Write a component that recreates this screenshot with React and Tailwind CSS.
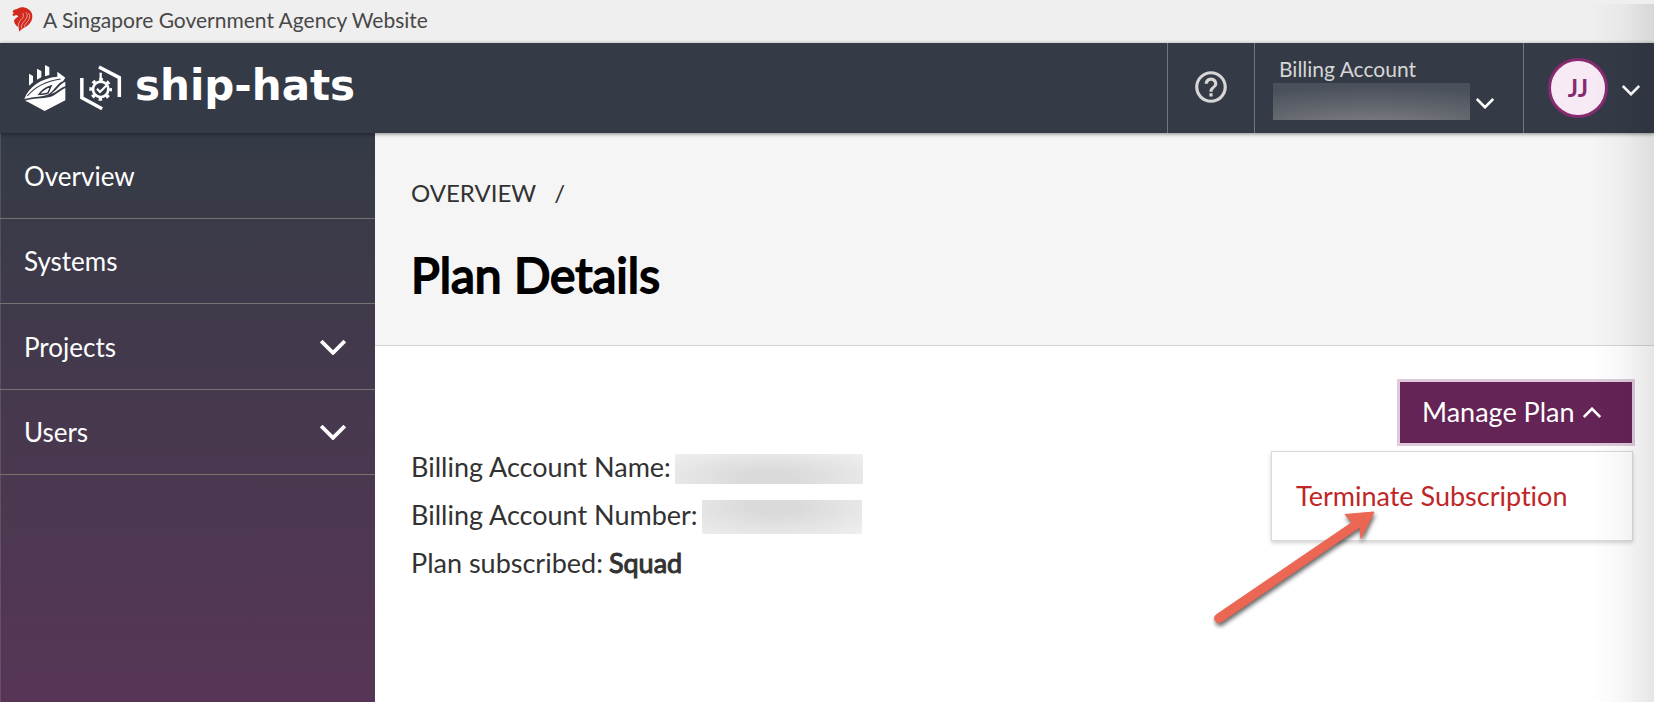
import React from "react";
import { MdHelpOutline } from "react-icons/md";

function Chevron({ up = false, className = "" }) {
  return (
    <svg viewBox="0 0 24 14" fill="none" stroke="currentColor" className={className} aria-hidden="true">
      <path d={up ? "M1 13 12 2 23 13" : "M1 1 12 12 23 1"} strokeWidth="3.5" />
    </svg>
  );
}

function LionMark() {
  return (
    <svg viewBox="0 0 62 74" className="h-[25px] w-[21px]" aria-hidden="true">
      <path
        fill="#d3281c"
        d="M5 9C10 7 14 8 18 4c8-5 20-4 28 1 8 4 13 11 14 20 1 10-3 20-12 28-7 6-17 10-28 20 2-7 0-11-4-15-6-5-10-11-10-18 2-6 8-9 13-12l-5-4-11 3-2-5 5-4-5-3 4-6Z"
      />
      <g fill="none" stroke="#efefef" strokeWidth="1.8" strokeLinecap="round">
        <path d="M32 19c5 7 0 13-6 19-6 7-9 13-6 23" />
        <path d="M42 17c6 9 2 16-5 24-6 7-10 12-9 21" />
        <path d="M50 19c5 10 1 18-5 25-4 5-7 8-8 13" />
      </g>
    </svg>
  );
}

function ShipHatsMark() {
  return (
    <svg viewBox="42 42 297 144" className="h-12 w-[99px]" aria-hidden="true">
      <g fill="#fff">
        <path d="M57 71l12 7v19l-12 10Z" />
        <path d="M81 56l13 7v19l-13 7Z" />
        <path d="M105 45l13 7v23l-13 4Z" />
        <path d="M43 147C56 112 92 84 142 80V65l24 18-7 11c-16 5-25 26-42 38-17 10-43 7-74 15Z" />
        <path d="M166 95v14c-17 5-28 20-43 22 18-11 26-29 43-36Z" />
        <path d="M45 152c25-8 52-5 75-11 18-5 29-20 46-27v37l-62 32-50-27Z" />
      </g>
      <path d="M52 138C76 109 106 94 152 87" fill="none" stroke="#343a46" strokeWidth="3.5" />
      <path d="M87 133c8-11 19-19 36-25l-9 21c-8 4-18 3-27 4Z" fill="#fff" stroke="#343a46" strokeWidth="4.5" />
      <g fill="none" stroke="#fff" strokeWidth="10.5">
        <path d="M215.500 84v59l61 33" />
        <path d="M267 51l61 32v58" />
        <circle cx="272" cy="118" r="23" strokeWidth="8" />
        <circle cx="272" cy="118" r="30" strokeWidth="8" strokeDasharray="11 12.560" strokeDashoffset="5" />
        <path d="M272 68v26" strokeWidth="7" />
        <path d="M261 116l9 10 20-20" strokeWidth="6.5" />
      </g>
    </svg>
  );
}

const navItems = [
  { label: "Overview" },
  { label: "Systems" },
  { label: "Projects", expandable: true },
  { label: "Users", expandable: true },
];

function Sidebar() {
  return (
    <nav className="w-[375px] shrink-0 bg-linear-to-b from-[#343b46] to-[#573556] text-white shadow-[inset_1px_0_0_rgba(255,255,255,0.12)]">
      <ul className="grid h-[342px] grid-rows-4 text-[26px]">
        {navItems.map((item) => (
          <li key={item.label} className="border-b border-[#74736f]">
            {item.expandable ? (
              <button type="button" className="flex h-full w-full items-center justify-between pt-0.5 pr-[29px] pl-6">
                {item.label}
                <Chevron className="h-[15px] w-[26px]" />
              </button>
            ) : (
              <a href="#" className="flex h-full items-center px-6 pt-0.5">
                {item.label}
              </a>
            )}
          </li>
        ))}
      </ul>
    </nav>
  );
}

function Header() {
  return (
    <header className="relative z-10 flex h-[90px] items-stretch bg-[#343a46] shadow-[0_1px_4px_rgba(0,0,0,0.45)]">
      <a href="#" className="flex items-center gap-3 pl-6 text-white">
        <ShipHatsMark />
        <span className="pb-1 font-['DejaVu_Sans',sans-serif] text-[42px] leading-none font-bold">ship-hats</span>
      </a>
      <button
        type="button"
        aria-label="Help"
        className="ml-auto flex w-[87px] items-center justify-center border-l border-[#74767b] pb-0.5 text-[#d6d6d6]"
      >
        <MdHelpOutline className="size-[38px]" />
      </button>
      <button
        type="button"
        aria-label="Billing Account"
        className="flex w-[269px] flex-col items-start border-l border-[#74767b] pt-3 pl-[18px]"
      >
        <span className="pl-1.5 text-[21px] leading-7 text-[#d6d6d6]">Billing Account</span>
        <span className="flex items-center gap-1.5">
          <span className="h-[37px] w-[197px] bg-[radial-gradient(ellipse_110%_120%_at_50%_130%,#84878c_0%,#666970_50%,#4b515b_100%)]" />
          <Chevron className="mt-1 h-[11px] w-[18px] text-white" />
        </span>
      </button>
      <button
        type="button"
        aria-label="User menu"
        className="flex w-[131px] items-center gap-3.5 border-l border-[#74767b] pl-6 text-white"
      >
        <span className="flex size-[60px] items-center justify-center rounded-full border-3 border-[#862b70] bg-[#f7eaf4] text-2xl font-bold text-[#862b70]">
          JJ
        </span>
        <Chevron className="mt-1 h-[11px] w-[18px]" />
      </button>
    </header>
  );
}

function PointerArrow() {
  return (
    <svg
      viewBox="0 0 174 124"
      className="pointer-events-none absolute top-14 -left-[61px] h-[124px] w-[174px] drop-shadow-[1px_3px_2px_rgba(0,0,0,0.6)]"
      aria-hidden="true"
    >
      <path
        fill="#ec6654"
        d="M5 107 141 14.500 134 6.500 163 4 150 30.500 149 19 11 113.500A4 4 0 0 1 5 107Z"
        stroke="#ec6654"
        strokeWidth="1"
      />
    </svg>
  );
}

function ManagePlan() {
  return (
    <div className="relative flex justify-end">
      <button
        type="button"
        aria-expanded="true"
        className="flex h-[61px] w-[232px] items-center gap-2 bg-[#642455] pl-[22px] text-[27px] text-white ring-3 ring-[#decadb]"
      >
        Manage Plan
        <Chevron up className="h-[11px] w-[18px]" />
      </button>
      <div className="absolute top-full -right-px mt-2 w-[362px] border border-[#dadada] bg-white shadow-[0_2px_4px_rgba(0,0,0,0.18)]">
        <button type="button" className="flex h-[88px] w-full items-center px-6 text-[27px] text-[#c02626]">
          Terminate Subscription
        </button>
        <PointerArrow />
      </div>
    </div>
  );
}

export default function App() {
  return (
    <div className="relative flex min-h-screen flex-col bg-white font-[Lato,sans-serif] text-[#323232] [font-variant-ligatures:none]">
      <div className="flex h-[43px] items-center gap-2.5 bg-[#efefef] pb-1 pl-3 text-[21px] text-[#484848]">
        <LionMark />
        A Singapore Government Agency Website
      </div>
      <Header />
      <div className="flex flex-1">
        <Sidebar />
        <main className="min-w-0 flex-1">
          <div className="h-[213px] border-b border-[#d4d4d4] bg-[#f5f5f5] pt-11 pl-9">
            <nav aria-label="Breadcrumb" className="flex gap-[18px] text-2xl leading-8">
              <a href="#">OVERVIEW</a>
              <span>/</span>
            </nav>
            <h1 className="mt-[34px] text-5xl leading-[64px] font-normal text-black [-webkit-text-stroke:2px]">Plan Details</h1>
          </div>
          <section className="pt-9 pr-[22px] pl-9">
            <ManagePlan />
            <dl className="text-[27px] leading-[48px]">
              <div className="flex items-center gap-1">
                <dt>Billing Account Name:</dt>
                <dd className="mt-1 h-[30px] w-[188px] bg-[radial-gradient(ellipse_at_50%_80%,#dadada_20%,#efefef_100%)]" />
              </div>
              <div className="flex items-center gap-1">
                <dt>Billing Account Number:</dt>
                <dd className="mt-1 h-[34px] w-40 bg-[radial-gradient(ellipse_at_45%_20%,#dadada_20%,#efefef_100%)]" />
              </div>
              <div className="flex items-center gap-1.5">
                <dt>Plan subscribed:</dt>
                <dd className="[-webkit-text-stroke:1px]">Squad</dd>
              </div>
            </dl>
          </section>
        </main>
      </div>
      <div className="pointer-events-none absolute top-1 right-0 bottom-0 z-20 w-16 bg-linear-to-r from-transparent via-black/3 to-black/10" />
    </div>
  );
}
